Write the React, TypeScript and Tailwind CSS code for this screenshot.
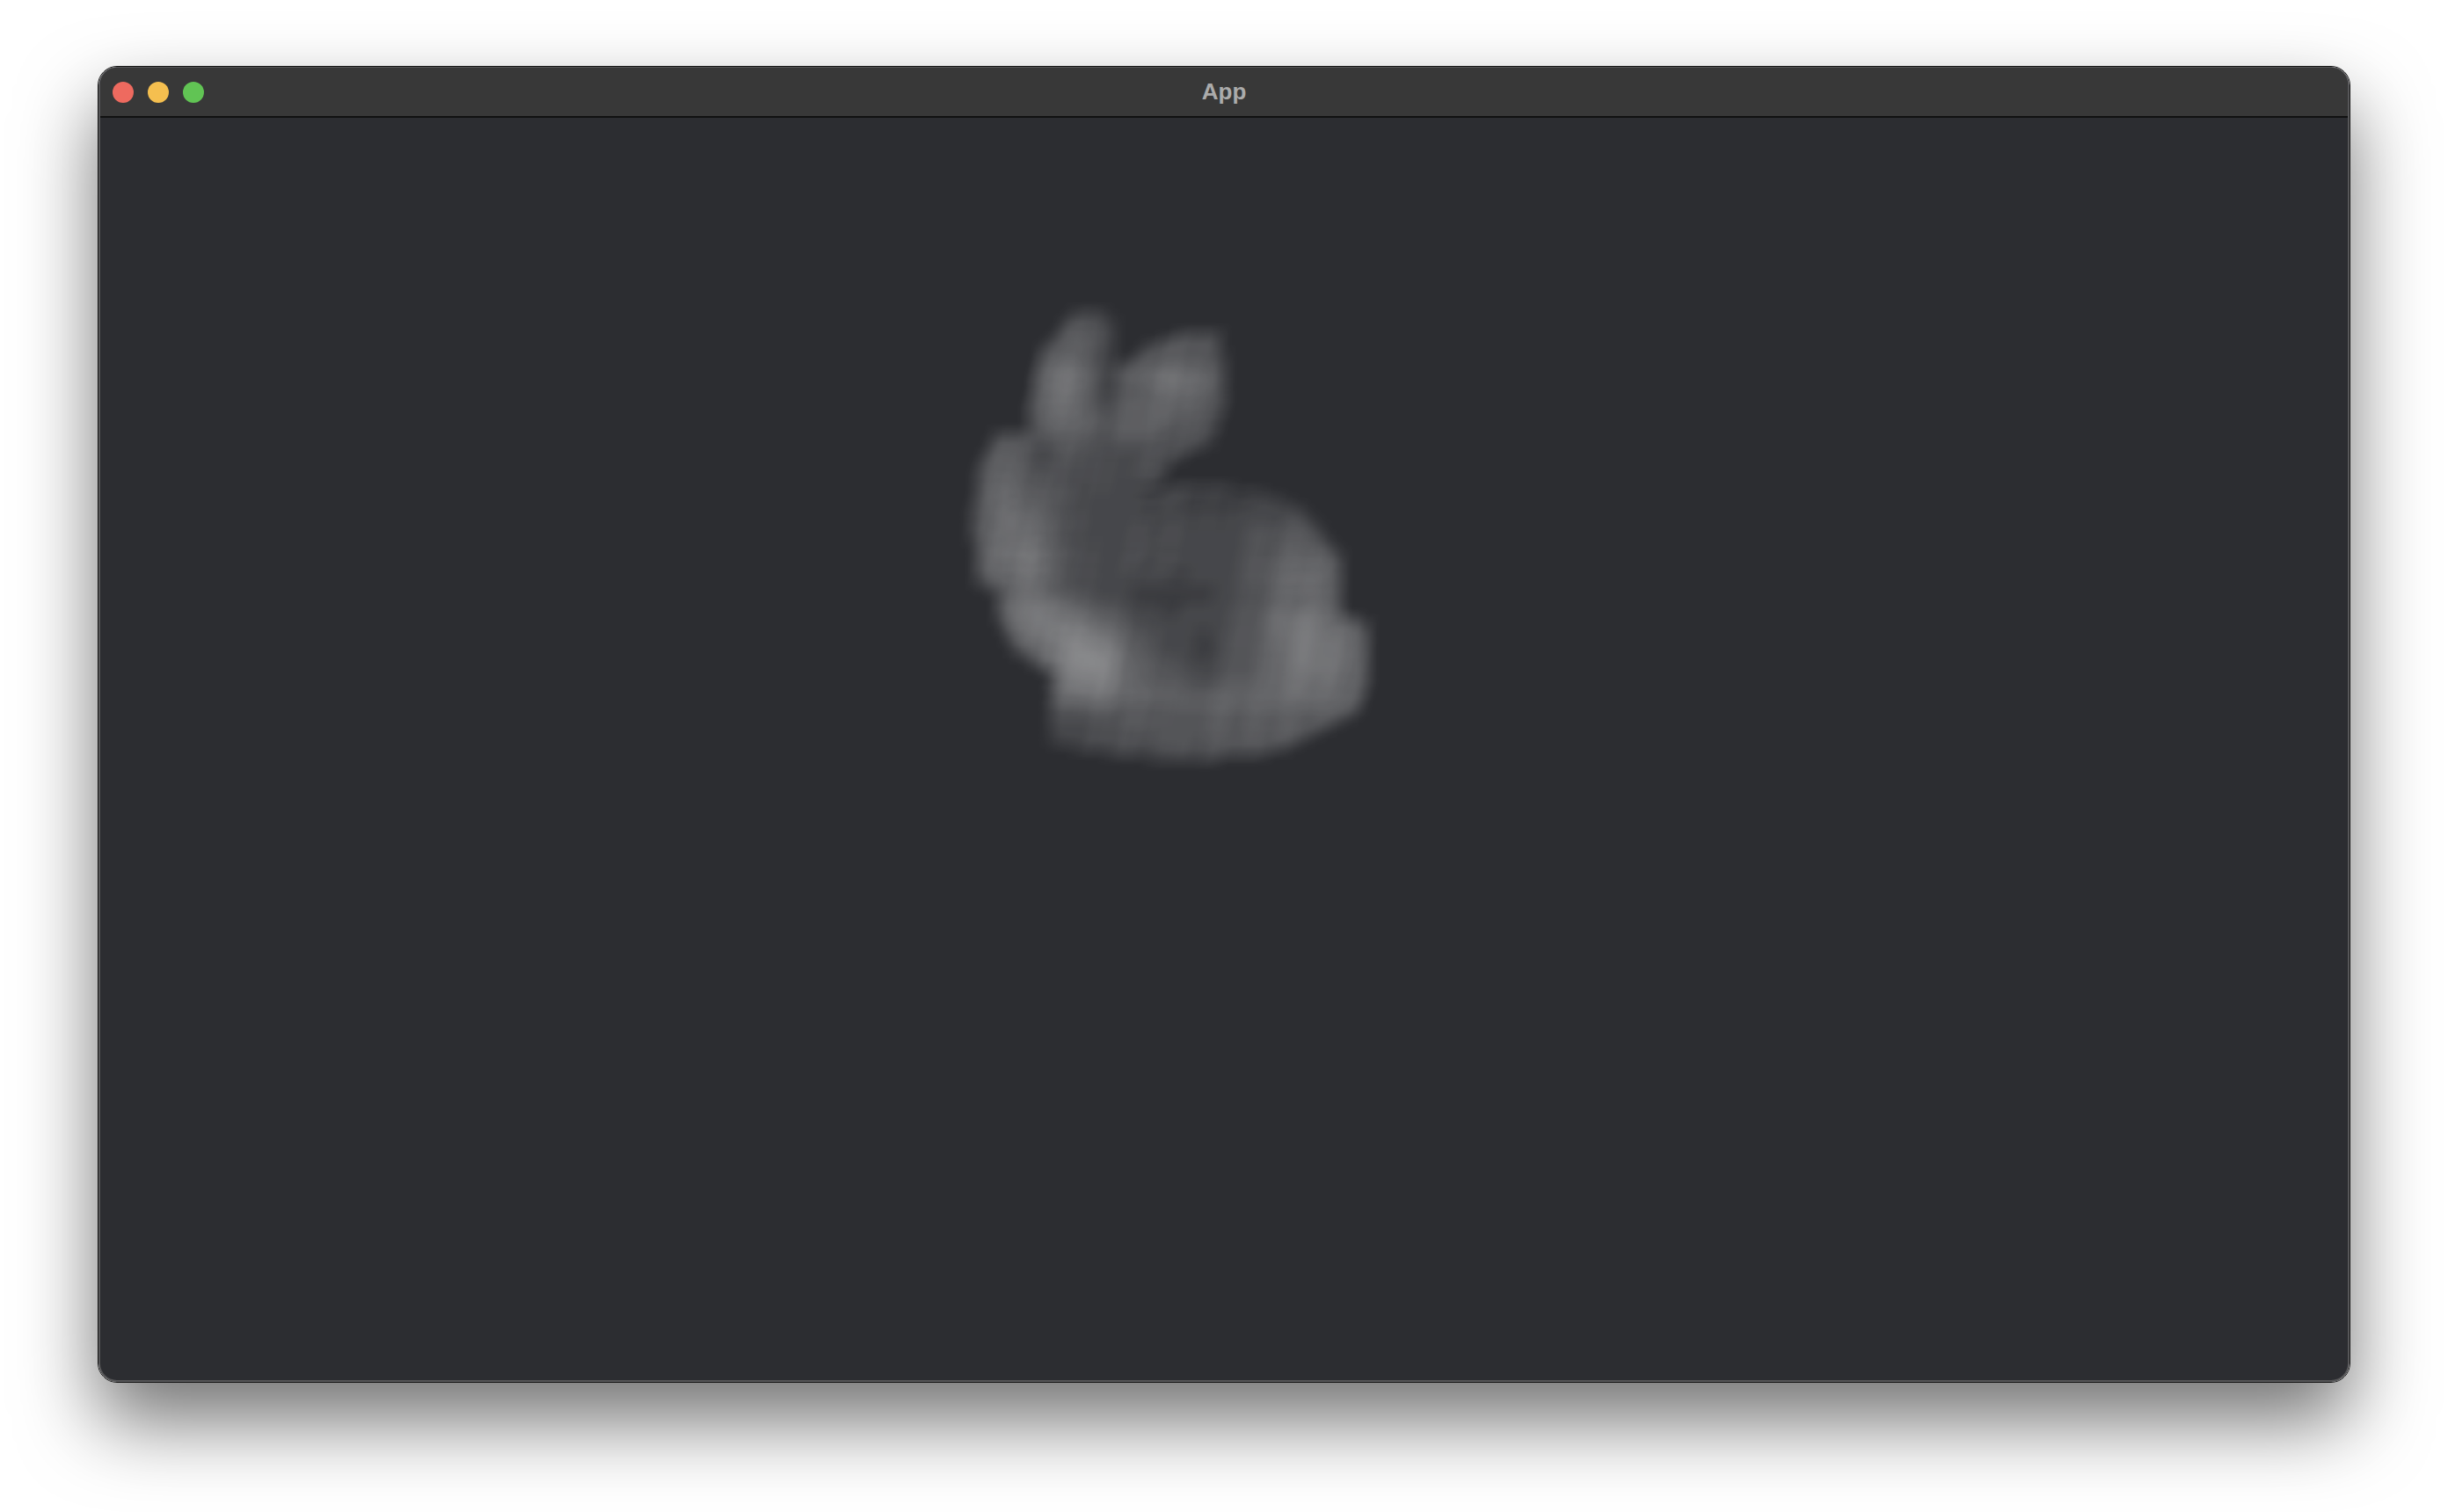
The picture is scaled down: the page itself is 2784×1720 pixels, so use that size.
import { useMemo } from "react"

type Pt = [number, number]
type Patch = [number, number, number, number, number]

const toPage = (x: number, y: number): Pt => [1060 + x / 2.904, 320 + y / 2.751]

// bunny outline
const outline: Pt[] = ([
  [440, 75], [585, 78], [615, 110], [620, 250], [690, 180], [800, 150], [960, 145], [995, 260],
  [990, 400], [940, 530], [860, 555], [770, 620], [700, 632], [890, 625], [1050, 632], [1160, 660],
  [1240, 700], [1305, 775], [1370, 850], [1375, 1025], [1465, 1065], [1450, 1310], [1420, 1370],
  [1280, 1440], [1160, 1490], [820, 1525], [610, 1500], [400, 1470], [370, 1440], [360, 1320],
  [385, 1245], [300, 1200], [260, 1170], [205, 1075], [185, 980], [135, 960], [110, 740], [135, 560],
  [190, 455], [310, 455], [305, 380], [340, 190], [400, 140],
] as Pt[]).map(([x, y]) => toPage(x, y))

// bright and dark patches: x, y, radius x, radius y, strength
const place = (list: Patch[]): Patch[] =>
  list.map(([x, y, rx, ry, s]) => {
    const [px, py] = toPage(x, y)
    return [px, py, rx, ry, s]
  })

const patches = place([
  [510, 1190, 46, 42, 0.3],
  [290, 860, 36, 60, 0.16],
  [390, 1060, 50, 34, 0.12],
  [420, 330, 34, 50, 0.15],
  [790, 320, 50, 34, 0.14],
  [640, 450, 45, 30, 0.06],
  [900, 1300, 150, 40, 0.08],
  [1230, 1050, 55, 90, 0.13],
  [1300, 1200, 50, 40, 0.1],
  [240, 650, 30, 55, 0.08],
])

const darks = place([
  [750, 1000, 70, 45, 0.06],
  [900, 1180, 25, 40, 0.06],
  [380, 540, 12, 14, 0.07],
  [580, 330, 9, 55, 0.1],
  [480, 1400, 60, 25, 0.05],
  [900, 700, 120, 24, 0.05],
])

const inside = (x: number, y: number) => {
  let hit = false
  for (let i = 0, j = outline.length - 1; i < outline.length; j = i++) {
    const [xi, yi] = outline[i]
    const [xj, yj] = outline[j]
    if (yi > y !== yj > y && x < ((xj - xi) * (y - yi)) / (yj - yi) + xi) hit = !hit
  }
  return hit
}

const bump = (x: number, y: number, p: Patch) =>
  p[4] * Math.exp(-(((x - p[0]) / p[2]) ** 2 + ((y - p[1]) / p[3]) ** 2))

const hash = (n: number) => {
  const s = Math.sin(n * 127.1 + 11.7) * 43758.5453
  return s - Math.floor(s)
}

// plaid of the slices, leaning columns and nearly flat rows
const weave = (x: number, y: number) => {
  const col = Math.floor((x + (y - 600) * 0.2) / 10)
  const row = Math.floor((y - (x - 1300) * 0.03) / 9)
  return (0.88 + hash(col) * 0.24) * (0.9 + hash(row + 200) * 0.2)
}

const density = (x: number, y: number) => {
  let d = 0.2
  for (const p of patches) d += bump(x, y, p)
  for (const p of darks) d -= bump(x, y, p)
  return Math.max(0.05, d) * weave(x, y)
}

const SIZE = 24
const STEP = 6

const makeBlocks = () => {
  const blocks: { points: string; a: number }[] = []
  const m = SIZE / 2 - 5
  const n = (SIZE / STEP) ** 2
  const lean = 3
  for (let y = 340; y < 880; y += STEP) {
    for (let x = 1090; x < 1575; x += STEP) {
      if (!(inside(x - m, y - m) && inside(x + m, y - m) && inside(x - m, y + m) && inside(x + m, y + m))) continue
      const a = 1 - Math.pow(1 - density(x, y), 1 / n)
      const h = SIZE / 2
      blocks.push({
        points: `${x - h + lean},${y - h} ${x + h + lean},${y - h} ${x + h - lean},${y + h} ${x - h - lean},${y + h}`,
        a,
      })
    }
  }
  return blocks
}

const Bunny = () => {
  const blocks = useMemo(makeBlocks, [])
  return (
    <svg viewBox="114 134 2556 1436" className="block w-full h-full">
      <defs>
        <filter id="soft" x="-5%" y="-5%" width="110%" height="110%">
          <feGaussianBlur stdDeviation="2" />
        </filter>
      </defs>
      <g filter="url(#soft)">
        {blocks.map((b, i) => (
          <polygon key={i} points={b.points} fill="#ffffff" fillOpacity={b.a} />
        ))}
      </g>
    </svg>
  )
}

export default function App() {
  return (
    <div className="w-[2784px] h-[1720px] bg-white pt-[75px] pl-[111px] overflow-hidden">
      <div className="w-[2562px] h-[1498px] rounded-[22px] border border-[#141414] shadow-[0_44px_88px_rgba(0,0,0,0.55)]">
        <div className="h-full rounded-[21px] overflow-hidden border-2 border-t border-[#565658] bg-[#2c2d31] flex flex-col">
          <div className="relative h-[57px] shrink-0 bg-[#383838] border-b-2 border-[#111111] flex items-center pl-[14px] gap-4">
            <div className="w-6 h-6 rounded-full bg-[#ee6a5f]" />
            <div className="w-6 h-6 rounded-full bg-[#f5bf4f]" />
            <div className="w-6 h-6 rounded-full bg-[#61c454]" />
            <div className="absolute inset-0 -top-px flex items-center justify-center text-[26px] font-bold text-[#ababab] font-['Liberation_Sans',sans-serif]">
              App
            </div>
          </div>
          <div className="flex-1 min-h-0">
            <Bunny />
          </div>
        </div>
      </div>
    </div>
  )
}
